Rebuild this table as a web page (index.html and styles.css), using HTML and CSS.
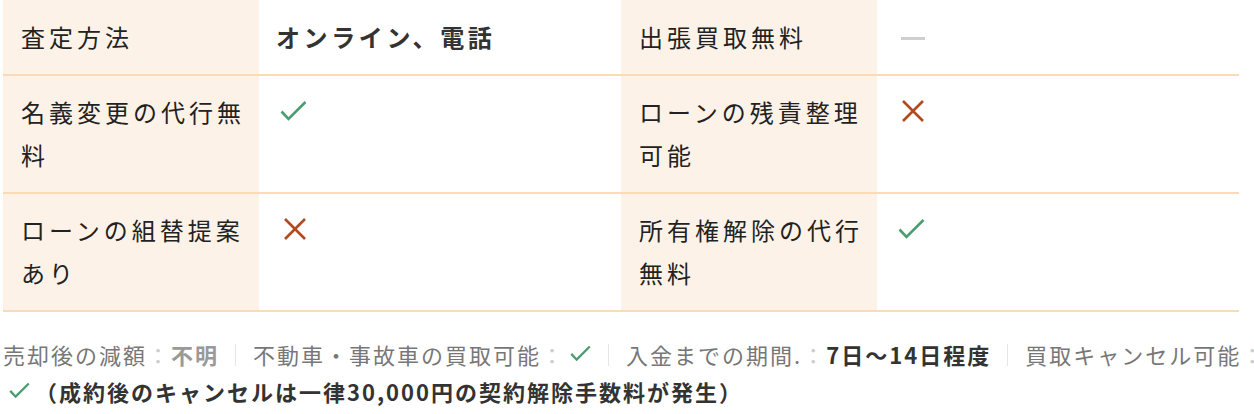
FILE: index.html
```html
<!DOCTYPE html>
<html lang="ja">
<head>
<meta charset="utf-8">
<link rel="stylesheet" href="styles.css">
</head>
<body>
<div class="spec">
  <div class="cell label first">査定方法</div>
  <div class="cell value first strong">オンライン、電話</div>
  <div class="cell label first">出張買取無料</div>
  <div class="cell value first"><span class="dash"></span></div>

  <div class="cell label">名義変更の代行無料</div>
  <div class="cell value"><svg class="ico-check" viewBox="0 0 27 22"><path d="M1.5 11.5 L8.5 19 L25.5 2"/></svg></div>
  <div class="cell label">ローンの残責整理可能</div>
  <div class="cell value"><svg class="ico-cross" viewBox="0 0 24 24"><path d="M2 2 L22 22 M22 2 L2 22"/></svg></div>

  <div class="cell label">ローンの組替提案あり</div>
  <div class="cell value"><svg class="ico-cross" viewBox="0 0 24 24"><path d="M2 2 L22 22 M22 2 L2 22"/></svg></div>
  <div class="cell label">所有権解除の代行無料</div>
  <div class="cell value"><svg class="ico-check" viewBox="0 0 27 22"><path d="M1.5 11.5 L8.5 19 L25.5 2"/></svg></div>
</div>

<div class="meta">
  <span class="item"><span class="key">売却後の減額</span><span class="colon">：</span><span class="muted-strong">不明</span></span>
  <span class="sep"></span>
  <span class="item"><span class="key">不動車・事故車の買取可能</span><span class="colon">：</span><svg class="ico-check small" viewBox="0 0 27 22"><path d="M1.5 11.5 L8.5 19 L25.5 2"/></svg></span>
  <span class="sep"></span>
  <span class="item"><span class="key">入金までの期間.</span><span class="colon">：</span><span class="strong">7日〜14日程度</span></span>
  <span class="sep"></span>
  <span class="item"><span class="key">買取キャンセル可能</span><span class="colon last">：</span></span>
  <span class="item note"><svg class="ico-check small" viewBox="0 0 27 22"><path d="M1.5 11.5 L8.5 19 L25.5 2"/></svg><span class="strong">（成約後のキャンセルは一律30,000円の契約解除手数料が発生）</span></span>
</div>
</body>
</html>
```

FILE: styles.css
```css
html, body {
  margin: 0;
  padding: 0;
  background: #fff;
  overflow: hidden;
}

body {
  font-family: "Noto Sans CJK JP", "Noto Sans", sans-serif;
  color: #222;
}

.spec {
  display: grid;
  grid-template-columns: 256px 362px 256px 362px;
  width: 1236px;
  margin-left: 3px;
}

.cell {
  padding: 14px 10px 16px 18px;
  font-size: 24px;
  line-height: 43px;
  letter-spacing: 4px;
  border-bottom: 2px solid #fbdab6;
}

.cell.first {
  padding-top: 15px;
}

.label {
  background: #fdf2e8;
  color: #222;
}

.value {
  color: #333;
  padding-left: 17px;
}

.strong {
  font-weight: 700;
  color: #333;
}

.value.strong {
  letter-spacing: 3.6px;
}

.dash {
  display: inline-block;
  width: 24px;
  height: 3px;
  background: #cfcfcf;
  vertical-align: middle;
  margin-top: -4px;
  margin-left: 7px;
}

.ico-check, .ico-cross {
  display: block;
  fill: none;
  stroke-width: 2.6;
  stroke-linecap: butt;
}

.ico-check {
  width: 27px;
  height: 22px;
  stroke: #4a9d6e;
  margin-top: 10px;
  margin-left: 4px;
}

.ico-cross {
  width: 24px;
  height: 24px;
  stroke: #b14b1f;
  margin-top: 9px;
  margin-left: 7px;
}

.meta {
  display: flex;
  flex-wrap: wrap;
  align-items: center;
  width: 1266px;
  margin-top: 24px;
  margin-left: 3px;
  font-size: 22px;
  line-height: 37px;
  letter-spacing: 2px;
  color: #777;
}

.item {
  display: inline-flex;
  align-items: center;
  white-space: nowrap;
}

.colon {
  color: #ccc;
}

.colon.last {
  letter-spacing: 0;
}

.muted-strong {
  font-weight: 700;
  color: #999;
}

.meta .strong {
  color: #333;
}

.sep {
  display: inline-block;
  width: 1px;
  height: 22px;
  background: #e6e6e6;
  margin: 0 17px 0 16px;
}

.ico-check.small {
  display: inline-block;
  width: 23px;
  height: 17px;
  margin: 0 0 2px 4px;
  stroke-width: 3;
}

.note .ico-check.small {
  margin: 0 4px 2px 5px;
}
```
